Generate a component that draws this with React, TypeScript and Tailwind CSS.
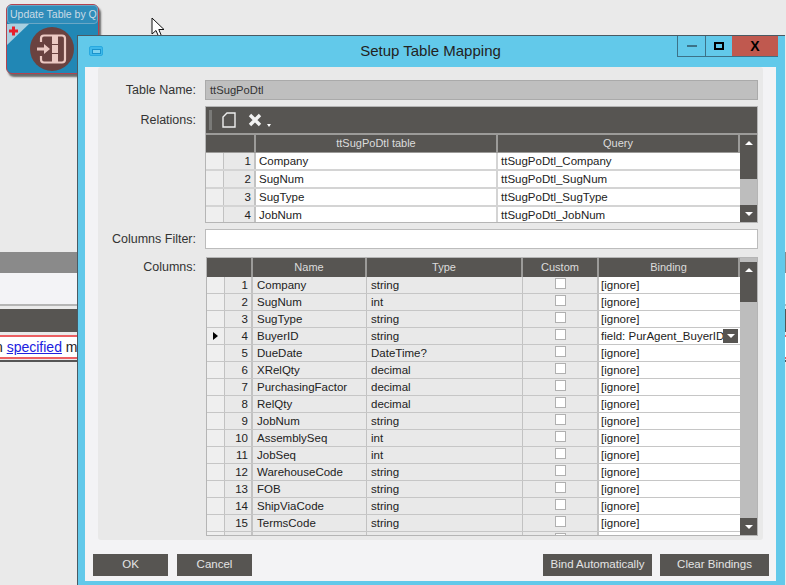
const font = "font-['Liberation_Sans',Arial,sans-serif]"

const relations = [
  ["Company", "ttSugPoDtl_Company"],
  ["SugNum", "ttSugPoDtl_SugNum"],
  ["SugType", "ttSugPoDtl_SugType"],
  ["JobNum", "ttSugPoDtl_JobNum"],
]

const columns = [
  ["Company", "string"],
  ["SugNum", "int"],
  ["SugType", "string"],
  ["BuyerID", "string"],
  ["DueDate", "DateTime?"],
  ["XRelQty", "decimal"],
  ["PurchasingFactor", "decimal"],
  ["RelQty", "decimal"],
  ["JobNum", "string"],
  ["AssemblySeq", "int"],
  ["JobSeq", "int"],
  ["WarehouseCode", "string"],
  ["FOB", "string"],
  ["ShipViaCode", "string"],
  ["TermsCode", "string"],
  ["", ""],
]

function ScrollBar({ thumb, thumbTop = 0 }: { thumb: number; thumbTop?: number }) {
  return (
    <div className="flex w-[17px] shrink-0 flex-col bg-[#bdbdbd]">
      <div className="flex flex-col bg-[#575552]" style={{ height: thumb, marginTop: thumbTop }}>
        <div className="mx-auto mt-[6px] h-0 w-0 border-x-[4px] border-b-[4px] border-x-transparent border-b-white" />
      </div>
      <div className="flex-1" />
      <div className="flex h-[17px] items-center justify-center bg-[#575552]">
        <div className="h-0 w-0 border-x-[4px] border-t-[4px] border-x-transparent border-t-white" />
      </div>
    </div>
  )
}

function HeadCell({ className, children }: { className: string; children?: React.ReactNode }) {
  return (
    <div className={`flex shrink-0 items-center justify-center border-r-2 border-[#9c9b99] bg-[#575552] text-[#dcdcdc] ${className}`}>
      {children}
    </div>
  )
}

function DarkButton({ className, children }: { className: string; children: React.ReactNode }) {
  return (
    <button className={`h-[22px] bg-[#575552] text-[11.5px] text-[#e4e4e4] ${className}`}>{children}</button>
  )
}

function FieldLabel({ children, className = "" }: { children: React.ReactNode; className?: string }) {
  return <div className={`w-[98px] shrink-0 whitespace-nowrap text-right text-[12.5px] text-[#333] ${className}`}>{children}</div>
}

function NodeCard() {
  return (
    <div className="absolute left-[6px] top-[4px] h-[70px] w-[93px] rounded-[6px] border border-[#b3434f] bg-[#2187b5] shadow-[2px_3px_2px_rgba(0,0,0,0.55)]">
      <div className="h-[19px] overflow-hidden whitespace-nowrap rounded-[4px] border border-[#6aa7c6] bg-[#2f8dba] pl-[2px] text-[10.5px] leading-[16px] text-[#c9dbe6]">
        Update Table by Q
      </div>
      <svg width="22" height="22" viewBox="0 0 22 22" className="absolute left-0 top-[19px]">
        <path d="M0 0H22L0 21Z" fill="#a9cfe0" />
        <path d="M6.5 2.5V11.5M2 7H11" stroke="#e8202c" strokeWidth="3" />
      </svg>
      <svg width="44" height="44" viewBox="0 0 44 44" className="absolute left-[23px] top-[22px]">
        <circle cx="22" cy="22" r="22" fill="#6a4240" />
        <path d="M11 15V11.5Q11 8.5 14 8.5H32Q35 8.5 35 11.5V32.5Q35 35.5 32 35.5H14Q11 35.5 11 32.5V29" fill="none" stroke="#ecc9c3" strokeWidth="2.2" />
        <rect x="22" y="9" width="6" height="8" fill="#ecc9c3" />
        <rect x="22" y="18" width="6" height="8" fill="#ecc9c3" />
        <rect x="22" y="27" width="6" height="8" fill="#ecc9c3" />
        <path d="M7 20.5H14V17L20 22L14 27V23.5H7Z" fill="#ecc9c3" />
      </svg>
    </div>
  )
}

export default function App() {
  return (
    <div className={`relative h-[585px] w-[786px] overflow-hidden bg-[#eaeaea] ${font}`}>
      {/* page behind the dialog */}
      <div className="pt-[252px]">
        <div className="h-[21px] bg-[#8a8a8a]" />
        <div className="h-[31px] bg-[#f3f3f6]" />
        <div className="h-[2px] bg-[#b5b5b5]" />
        <div className="mt-[3px] h-[23px] bg-[#575552]" />
        <div className="mt-[3px] h-[24px] overflow-hidden whitespace-nowrap border-y-2 border-[#ec5f62] bg-white text-[14px] leading-[20px] text-[#222]">
          <span className="-ml-[5px]">n </span>
          <span className="text-[#2020e0] underline">specified</span> m
        </div>
        <div className="mt-[1px] h-[2px] bg-[#555]" />
      </div>

      <NodeCard />

      <svg width="15" height="22" viewBox="0 0 15 22" className="absolute left-[151px] top-[17px]">
        <path d="M1 1V17L5 13.5L7.8 20L10.5 19L7.8 12.5H13Z" fill="#fff" stroke="#111" strokeWidth="1" />
      </svg>

      {/* dialog */}
      <div className="absolute left-[77px] top-[35px] flex h-[550px] w-[708px] flex-col border-l border-t border-[#4a5a63] bg-[#62c9ea]">
        <div className="relative flex h-[31px] shrink-0 items-center justify-center pr-[2px] text-[15px] text-[#222]">
          <div className="absolute left-[11px] top-[10px] flex h-[10px] w-[14px] items-center justify-center rounded-[2px] border border-[#28a9e0] bg-[#3fb9ea]">
            <div className="h-[5px] w-[9px] border border-[#1a93cc] bg-[#7fd3f0]" />
          </div>
          Setup Table Mapping
          <div className="absolute right-[7px] top-0 flex h-[21px]">
            <div className="flex w-[29px] items-center justify-center border-x border-b border-[#3c7288]">
              <div className="h-[2px] w-[10px] bg-[#3c7288]" />
            </div>
            <div className="flex w-[26px] items-center justify-center border-b border-[#3c7288]">
              <div className="h-[8px] w-[10px] border-2 border-black" />
            </div>
            <div className="flex w-[46px] items-center justify-center border-b border-[#3c7288] bg-[#c0594f] text-[14px] font-bold text-black">
              X
            </div>
          </div>
        </div>

        <div className="mb-[4px] ml-[7px] mr-[9px] flex min-h-0 flex-1 flex-col bg-[#f3f3f5]">
          <div className="mx-[13px] flex h-[473px] shrink-0 flex-col rounded-[3px] bg-[#e9e9e9] pt-[13px]">
            {/* table name */}
            <div className="flex h-[20px] items-center">
              <FieldLabel>Table Name:</FieldLabel>
              <div className="ml-[9px] flex h-[20px] w-[553px] items-center border border-[#aaa] bg-[#bfbfbf] pl-[4px] text-[11.2px] text-[#333]">
                ttSugPoDtl
              </div>
            </div>

            {/* relations */}
            <div className="mt-[6px] flex h-[117px]">
              <FieldLabel className="pt-[5px]">Relations:</FieldLabel>
              <div className="ml-[9px] flex w-[553px] flex-col border border-[#b5b5b5]">
                <div className="flex h-[26px] shrink-0 items-center bg-[#575552] pl-[3px]">
                  <div className="h-[20px] w-[3px] bg-[#7a7a78]" />
                  <svg width="14" height="16" viewBox="0 0 14 16" className="ml-[10px]">
                    <path d="M5 1H13V15H1V5Z" fill="none" stroke="#eee" strokeWidth="1.4" />
                  </svg>
                  <svg width="14" height="14" viewBox="0 0 14 14" className="ml-[12px]">
                    <path d="M2 2L12 12M12 2L2 12" stroke="#f2f2f2" strokeWidth="3.4" />
                  </svg>
                  <div className="ml-[5px] mt-[10px] h-0 w-0 border-x-[2px] border-t-[3px] border-x-transparent border-t-white" />
                </div>
                <div className="flex min-h-0 flex-1 border-t-2 border-[#9c9b99]">
                  <div className="flex min-w-0 flex-1 flex-col overflow-hidden text-[11.5px] text-[#222]">
                    <div className="flex h-[18px] shrink-0 border-b border-[#9c9b99] text-[11px]">
                      <HeadCell className="w-[50px]" />
                      <HeadCell className="w-[242px]">ttSugPoDtl table</HeadCell>
                      <HeadCell className="flex-1">Query</HeadCell>
                    </div>
                    {relations.map((row, i) => (
                      <div key={row[0]} className="flex h-[18px] shrink-0 border-b-2 border-[#d4d4d4] leading-[17px]">
                        <div className="w-[18px] shrink-0 border-r border-[#c2c2c2] bg-[#efefef]" />
                        <div className="w-[32px] shrink-0 border-r-2 border-[#c2c2c2] bg-[#e9e9e9] pr-[3px] text-right">{i + 1}</div>
                        <div className="w-[242px] shrink-0 border-r-2 border-[#d4d4d4] bg-white pl-[3px]">{row[0]}</div>
                        <div className="flex-1 bg-white pl-[3px]">{row[1]}</div>
                      </div>
                    ))}
                  </div>
                  <ScrollBar thumb={44} />
                </div>
              </div>
            </div>

            {/* filter */}
            <div className="mt-[6px] flex h-[20px] items-center">
              <FieldLabel>Columns Filter:</FieldLabel>
              <div className="ml-[9px] h-[20px] w-[553px] border border-[#bcbcbc] bg-white" />
            </div>

            {/* columns */}
            <div className="mt-[8px] flex h-[279px]">
              <FieldLabel className="pt-[1px]">Columns:</FieldLabel>
              <div className="ml-[10px] flex w-[552px] border border-[#b5b5b5]">
                <div className="flex min-w-0 flex-1 flex-col overflow-hidden text-[11.5px] text-[#222]">
                  <div className="flex h-[19px] shrink-0 text-[11px]">
                    <HeadCell className="w-[46px]" />
                    <HeadCell className="w-[114px]">Name</HeadCell>
                    <HeadCell className="w-[156px]">Type</HeadCell>
                    <HeadCell className="w-[76px]">Custom</HeadCell>
                    <HeadCell className="flex-1">Binding</HeadCell>
                  </div>
                  {columns.map((row, i) => (
                    <div key={i} className="flex h-[17px] shrink-0 border-b border-[#c6c6c6] leading-[16px]">
                      <div className="flex w-[18px] shrink-0 items-center justify-center border-r border-[#c2c2c2] bg-[#efefef]">
                        {row[0] === "BuyerID" && (
                          <div className="h-0 w-0 border-y-[4px] border-l-[5px] border-y-transparent border-l-black" />
                        )}
                      </div>
                      <div className="w-[28px] shrink-0 border-r-2 border-[#c2c2c2] bg-[#e9e9e9] pr-[3px] text-right">{row[0] && i + 1}</div>
                      <div className="w-[114px] shrink-0 border-r border-[#c2c2c2] bg-[#e9e9e9] pl-[4px]">{row[0]}</div>
                      <div className="w-[156px] shrink-0 border-r border-[#c2c2c2] bg-[#e9e9e9] pl-[4px]">{row[1]}</div>
                      <div className="flex w-[76px] shrink-0 justify-center border-r-2 border-[#c2c2c2] bg-[#e9e9e9] pt-[1px]">
                        <div className="h-[11px] w-[11px] border border-[#b0b0b0] bg-white" />
                      </div>
                      <div className="relative min-w-0 flex-1 overflow-hidden whitespace-nowrap bg-white pl-[2px]">
                        {row[0] === "BuyerID" ? "field: PurAgent_BuyerID" : row[0] ? "[ignore]" : ""}
                        {row[0] === "BuyerID" && (
                          <div className="absolute right-[2px] top-[1px] flex h-[14px] w-[15px] items-center justify-center bg-[#575552]">
                            <div className="h-0 w-0 border-x-[4px] border-t-[4px] border-x-transparent border-t-white" />
                          </div>
                        )}
                      </div>
                    </div>
                  ))}
                </div>
                <ScrollBar thumb={40} thumbTop={4} />
              </div>
            </div>
          </div>

          {/* buttons */}
          <div className="mt-[14px] flex pl-[8px] pr-[7px]">
            <DarkButton className="w-[75px]">OK</DarkButton>
            <DarkButton className="ml-[9px] w-[75px]">Cancel</DarkButton>
            <DarkButton className="ml-auto w-[109px]">Bind Automatically</DarkButton>
            <DarkButton className="ml-[8px] w-[109px]">Clear Bindings</DarkButton>
          </div>
        </div>
      </div>
    </div>
  )
}
